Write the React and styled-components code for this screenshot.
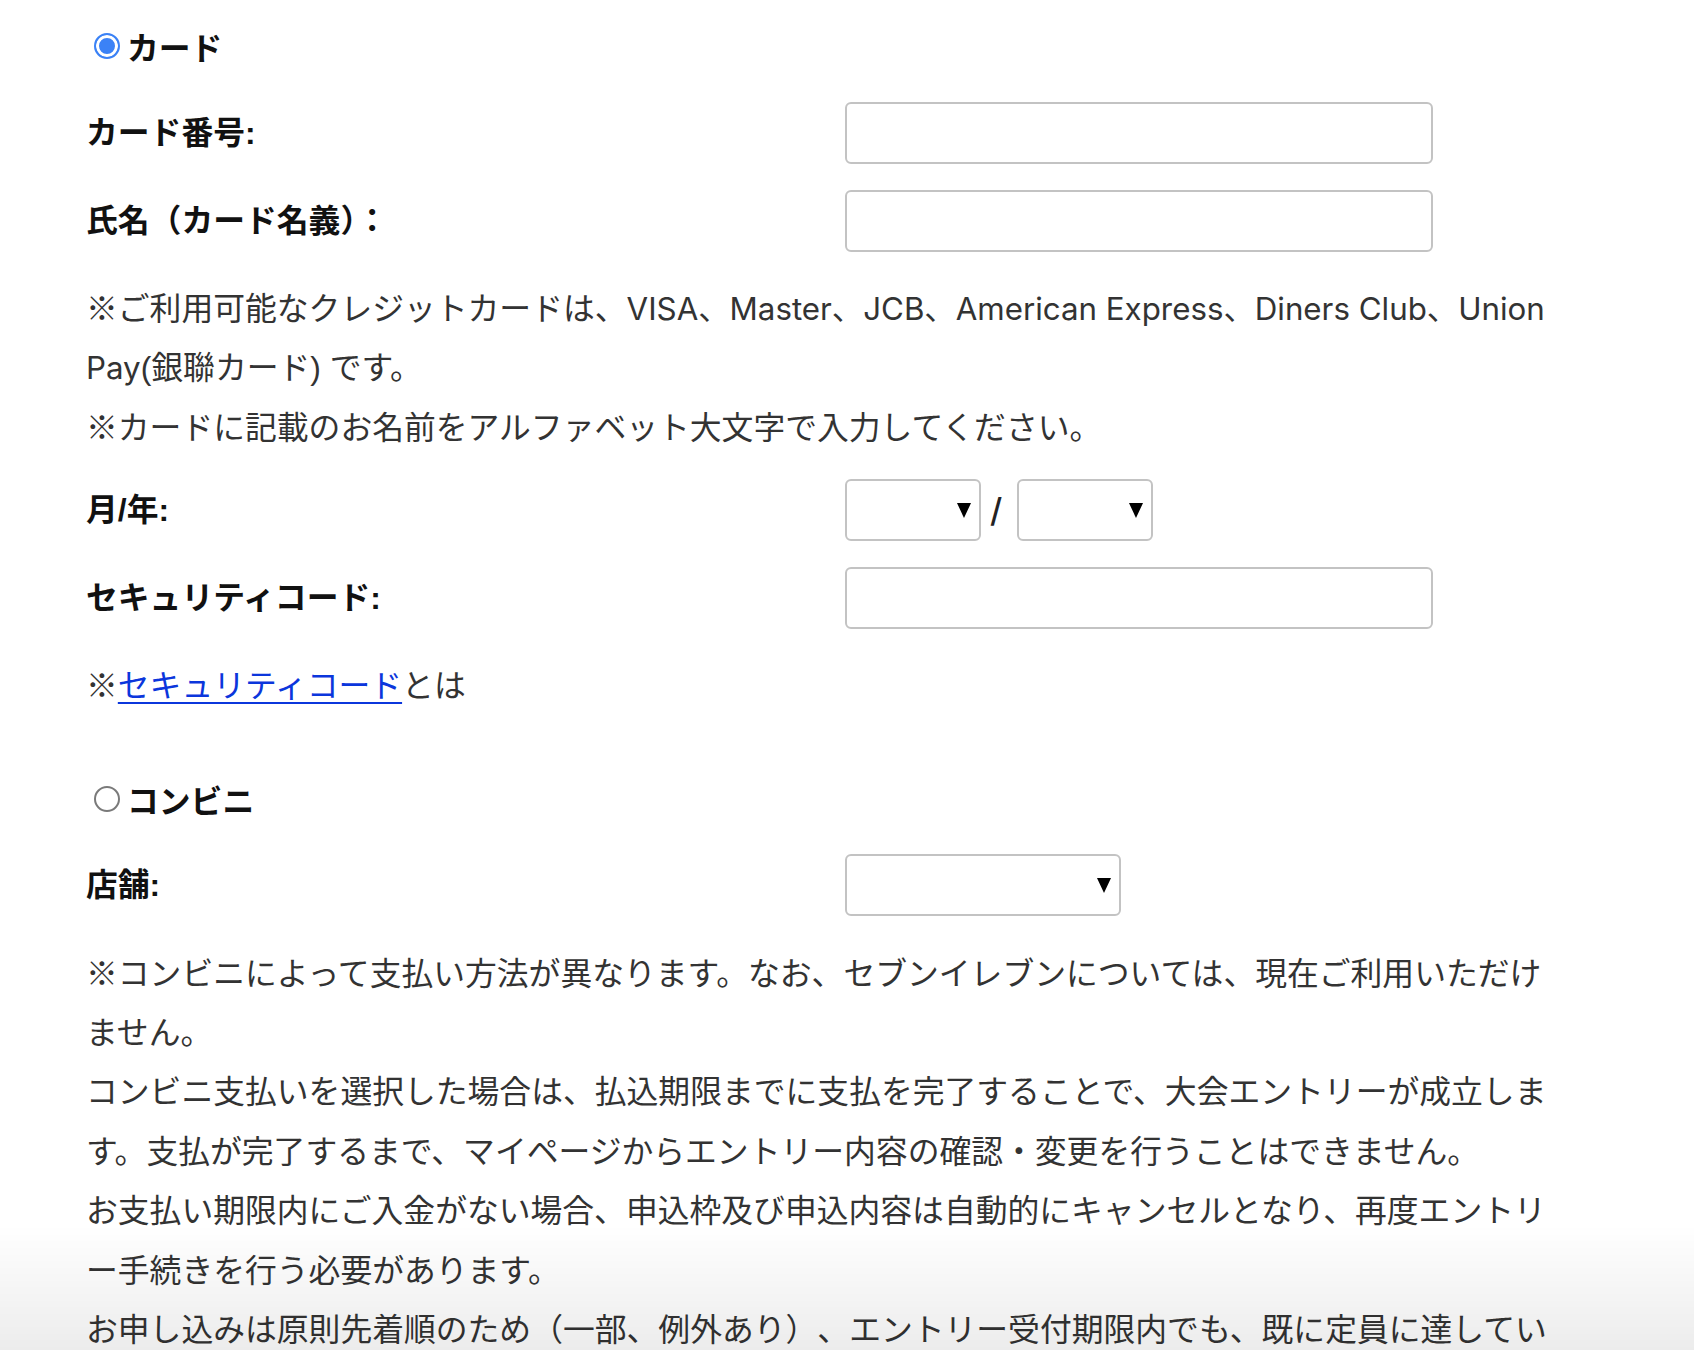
import React from 'react';
import styled, { createGlobalStyle } from 'styled-components';

const GlobalStyle = createGlobalStyle`
  html, body {
    margin: 0;
    padding: 0;
    background: #ffffff;
  }
  body {
    font-family: "Liberation Sans", "Noto Sans CJK JP", sans-serif;
    color: #333333;
  }
`;

const Page = styled.main`
  box-sizing: border-box;
  width: 1566px;
  padding: 16px 0 0 86px;
`;

const Section = styled.section`
  display: flex;
  flex-direction: column;
  margin-top: ${(p) => p.$mt || 0}px;
`;

const RadioRow = styled.label`
  display: flex;
  align-items: center;
  gap: 7px;
  height: 60px;
  padding-left: 8px;
  font-size: 31.8px;
  font-weight: 700;
  color: #111111;
`;

const RadioMark = styled.span`
  box-sizing: border-box;
  flex: none;
  width: 26px;
  height: 26px;
  border-radius: 50%;
  border: ${(p) => (p.$checked ? '2.5px solid #3b82f6' : '2px solid #7a7a7a')};
  background: ${(p) => (p.$checked ? '#3b82f6' : '#ffffff')};
  box-shadow: ${(p) => (p.$checked ? 'inset 0 0 0 3px #ffffff' : 'none')};
`;

const FormRow = styled.div`
  display: grid;
  grid-template-columns: 759px auto;
  align-items: center;
  margin-top: ${(p) => p.$mt || 0}px;
`;

const FieldLabel = styled.span`
  font-size: 31.8px;
  line-height: 1.2;
  font-weight: 700;
  color: #111111;
`;

const TextInput = styled.input`
  box-sizing: border-box;
  width: 588px;
  height: 62px;
  border: 2px solid #c3c3c3;
  border-radius: 6px;
  background: #ffffff;
  padding: 0 12px;
  font-size: 28px;
  outline: none;
`;

const SelectGroup = styled.div`
  display: flex;
  align-items: center;
  gap: 12px;
`;

const SelectWrap = styled.div`
  position: relative;
  width: ${(p) => p.$w}px;
  height: 62px;

  &::after {
    content: '';
    position: absolute;
    right: 10px;
    top: 50%;
    margin-top: -7px;
    border-left: 7.5px solid transparent;
    border-right: 7.5px solid transparent;
    border-top: 15px solid #000000;
    pointer-events: none;
  }
`;

const Select = styled.select`
  appearance: none;
  -webkit-appearance: none;
  box-sizing: border-box;
  width: 100%;
  height: 100%;
  border: 2px solid #c3c3c3;
  border-radius: 6px;
  background: #ffffff;
  font-size: 28px;
  outline: none;
`;

const Slash = styled.span`
  margin: 0 3px 0 -3px;
  font-family: Inter, "Liberation Sans", sans-serif;
  font-size: 33px;
  font-weight: 500;
  color: #222222;
`;

const Note = styled.div`
  margin-top: ${(p) => p.$mt || 0}px;
  font-size: 31.8px;
  line-height: 59.4px;
  color: #333333;
  line-break: normal;
  text-spacing-trim: space-all;
`;

const NoteLine = styled.p`
  margin: 0;
`;

const Latin = styled.span`
  font-family: Inter, "Liberation Sans", "Noto Sans CJK JP", sans-serif;
  font-size: 31.3px;
`;

const Link = styled.a`
  color: #0b36dc;
  text-decoration: underline;
  text-decoration-thickness: 2px;
  text-underline-offset: 5px;
`;

const BottomFade = styled.div`
  position: fixed;
  left: 0;
  right: 0;
  bottom: 0;
  height: 125px;
  background: linear-gradient(to bottom, rgba(0, 0, 0, 0), rgba(0, 0, 0, 0.075));
  pointer-events: none;
`;

export default function App() {
  return (
    <>
      <GlobalStyle />
      <Page lang="ja">
        <Section>
          <RadioRow>
            <RadioMark $checked />
            カード
          </RadioRow>

          <FormRow $mt={26}>
            <FieldLabel>カード番号:</FieldLabel>
            <TextInput type="text" />
          </FormRow>

          <FormRow $mt={26}>
            <FieldLabel>氏名（カード名義）：</FieldLabel>
            <TextInput type="text" />
          </FormRow>

          <Note $mt={28}>
            <NoteLine>
              ※ご利用可能なクレジットカードは、<Latin>VISA、Master、JCB、American Express、Diners Club、Union Pay</Latin>(銀聯カード) です。
            </NoteLine>
            <NoteLine>※カードに記載のお名前をアルファベット大文字で入力してください。</NoteLine>
          </Note>

          <FormRow $mt={21}>
            <FieldLabel>月/年:</FieldLabel>
            <SelectGroup>
              <SelectWrap $w={136}>
                <Select defaultValue="">
                  <option value=""></option>
                </Select>
              </SelectWrap>
              <Slash>/</Slash>
              <SelectWrap $w={136}>
                <Select defaultValue="">
                  <option value=""></option>
                </Select>
              </SelectWrap>
            </SelectGroup>
          </FormRow>

          <FormRow $mt={26}>
            <FieldLabel>セキュリティコード:</FieldLabel>
            <TextInput type="text" />
          </FormRow>

          <Note $mt={28}>
            <NoteLine>
              ※<Link href="#">セキュリティコード</Link>とは
            </NoteLine>
          </Note>
        </Section>

        <Section $mt={52}>
          <RadioRow>
            <RadioMark />
            コンビニ
          </RadioRow>

          <FormRow $mt={25}>
            <FieldLabel>店舗:</FieldLabel>
            <SelectWrap $w={276}>
              <Select defaultValue="">
                <option value=""></option>
              </Select>
            </SelectWrap>
          </FormRow>

          <Note $mt={29}>
            <NoteLine>
              ※コンビニによって支払い方法が異なります。なお、セブンイレブンについては、現在ご利用いただけません。
            </NoteLine>
            <NoteLine>
              コンビニ支払いを選択した場合は、払込期限までに支払を完了することで、大会エントリーが成立します。支払が完了するまで、マイページからエントリー内容の確認・変更を行うことはできません。
            </NoteLine>
            <NoteLine>
              お支払い期限内にご入金がない場合、申込枠及び申込内容は自動的にキャンセルとなり、再度エントリー手続きを行う必要があります。
            </NoteLine>
            <NoteLine>
              お申し込みは原則先着順のため（一部、例外あり）、エントリー受付期限内でも、既に定員に達している場合はお申し込みいただけません。
            </NoteLine>
          </Note>
        </Section>
      </Page>
      <BottomFade />
    </>
  );
}
